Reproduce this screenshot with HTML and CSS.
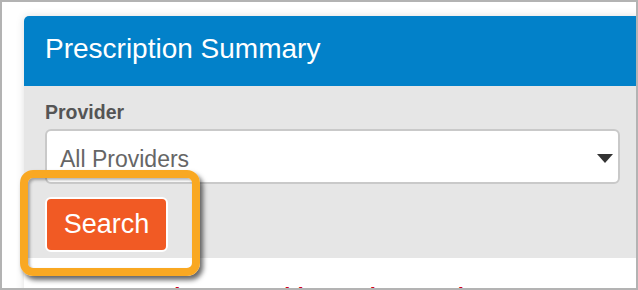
FILE: index.html
```html
<!DOCTYPE html>
<html>
<head>
<meta charset="utf-8">
<link rel="stylesheet" href="styles.css">
</head>
<body>
<div class="frame">
  <div class="panel">
    <div class="panel-header">Prescription Summary</div>
    <div class="panel-form">
      <div class="label">Provider</div>
      <div class="select">
        <span class="select-text">All Providers</span>
        <span class="caret"></span>
      </div>
      <button class="btn-search">Search</button>
    </div>
    <div class="panel-body">
      <p class="error">You must select a provider to view results</p>
    </div>
  </div>
  <div class="highlight"></div>
</div>
</body>
</html>
```

FILE: styles.css
```css
html, body {
  margin: 0;
  padding: 0;
  background: #fff;
}
body {
  font-family: "Liberation Sans", Arial, sans-serif;
}
.frame {
  position: relative;
  width: 638px;
  height: 290px;
  box-sizing: border-box;
  border: 2px solid #b3b3b3;
  overflow: hidden;
  background: #fff;
  padding: 14px 0 0 22px;
}
.panel {
  width: 619px;
  border-radius: 5px 5px 0 0;
  background: #fff;
  box-shadow: 0 0 9px rgba(0, 0, 0, 0.13);
}
.panel-header {
  height: 70px;
  box-sizing: border-box;
  display: flex;
  align-items: center;
  padding: 0 0 5px 21px;
  background: #0281c9;
  color: #fff;
  font-size: 28px;
  border-radius: 5px 5px 0 0;
}
.panel-form {
  background: #e6e6e6;
  padding: 14px 23px 6px 21px;
}
.label {
  font-size: 19.5px;
  font-weight: bold;
  color: #555;
  line-height: 24px;
  margin-bottom: 5px;
}
.select {
  height: 55px;
  box-sizing: border-box;
  display: flex;
  align-items: center;
  background: #fff;
  border: 2px solid #c9c9c9;
  border-radius: 6px;
  padding: 6px 5px 0 13px;
}
.select-text {
  font-size: 23px;
  color: #666;
}
.caret {
  margin-left: auto;
  margin-bottom: 2px;
  width: 0;
  height: 0;
  border-left: 8px solid transparent;
  border-right: 8px solid transparent;
  border-top: 9px solid #333;
}
.btn-search {
  display: block;
  margin-top: 13px;
  width: 123px;
  height: 55px;
  box-sizing: border-box;
  border: 2px solid #fff;
  border-radius: 6px;
  background: #f15a24;
  color: #fff;
  font-family: "Liberation Sans", Arial, sans-serif;
  font-size: 27px;
  padding: 0;
}
.panel-body {
  padding: 24.5px 21px 20px;
}
.error {
  margin: 0;
  color: #d0021b;
  font-size: 22px;
  font-weight: bold;
  line-height: 26px;
}
.highlight {
  position: absolute;
  left: 18px;
  top: 168px;
  width: 180px;
  height: 106px;
  box-sizing: border-box;
  border: 8px solid #f9a822;
  border-radius: 13px;
  box-shadow: 3px 4px 5px rgba(0, 0, 0, 0.6), inset 2px 2px 3px rgba(0, 0, 0, 0.3);
}
```
